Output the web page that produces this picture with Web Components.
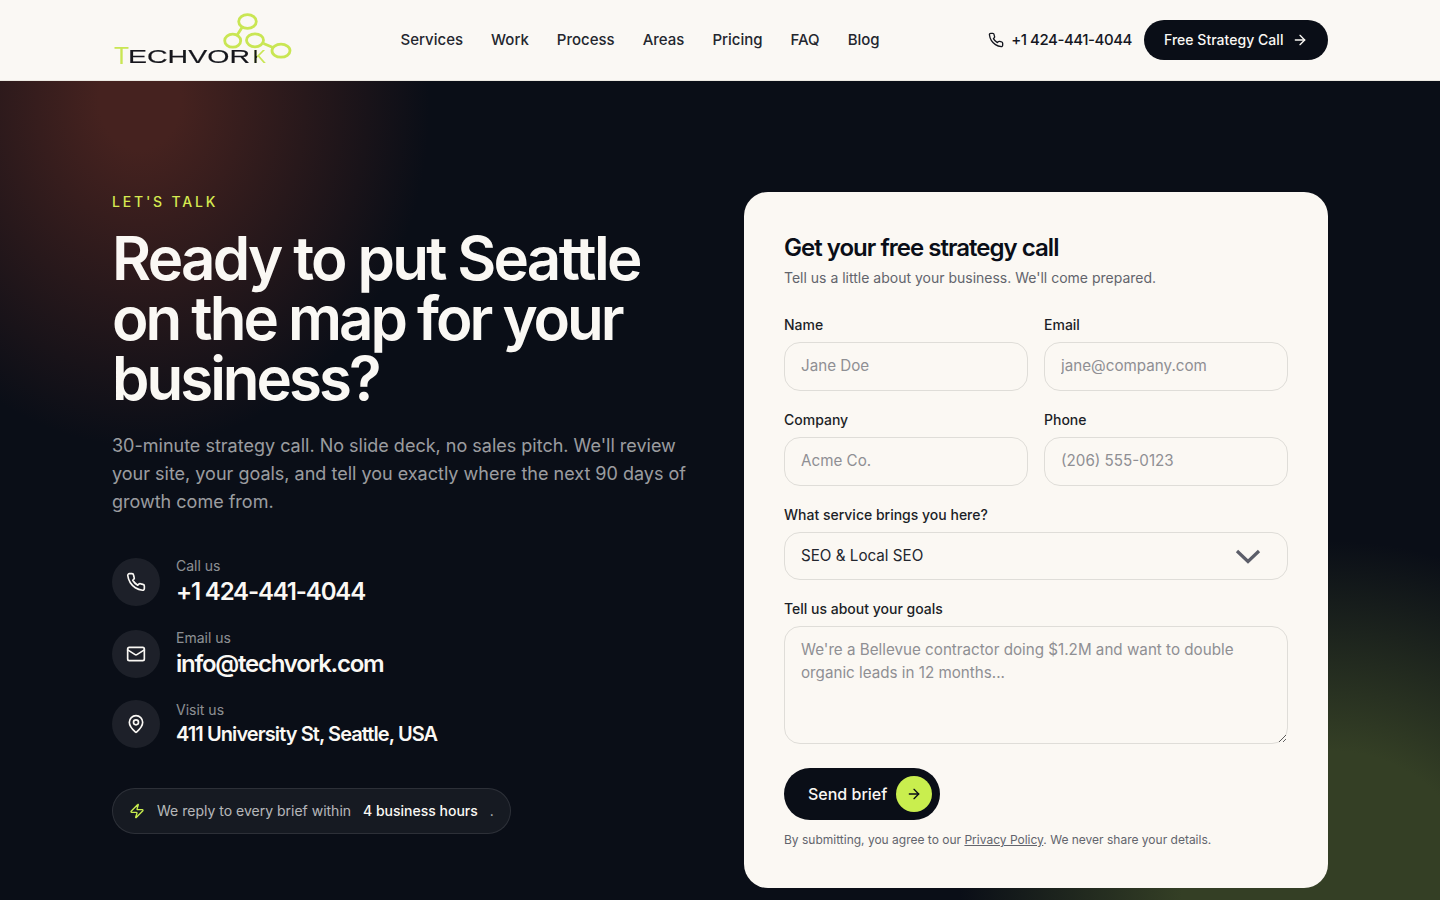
<!DOCTYPE html>
<html lang="en"><head><meta charset="utf-8"><title>Techvork</title>
<style>
html,body{margin:0;padding:0;background:#0a0e17}
body{font-family:Inter,"Liberation Sans",sans-serif}
</style></head><body>
<site-header></site-header>
<contact-hero>
  <contact-intro slot="left"></contact-intro>
  <lead-form slot="right"></lead-form>
</contact-hero>
<script>
const I={
 phone:'<path d="M22 16.92v3a2 2 0 0 1-2.18 2 19.79 19.79 0 0 1-8.63-3.07 19.5 19.5 0 0 1-6-6 19.79 19.79 0 0 1-3.07-8.67A2 2 0 0 1 4.11 2h3a2 2 0 0 1 2 1.72c.13.96.36 1.9.7 2.81a2 2 0 0 1-.45 2.11L8.09 9.91a16 16 0 0 0 6 6l1.27-1.27a2 2 0 0 1 2.11-.45c.91.34 1.85.57 2.81.7A2 2 0 0 1 22 16.92z"/>',
 arrow:'<path d="M5 12h14"/><path d="m12 5 7 7-7 7"/>',
 mail:'<rect x="2" y="4" width="20" height="16" rx="2"/><path d="m22 7-8.97 5.7a1.94 1.94 0 0 1-2.06 0L2 7"/>',
 pin:'<path d="M20 10c0 4.99-5.54 10.19-7.4 11.8a1 1 0 0 1-1.2 0C9.54 20.19 4 14.99 4 10a8 8 0 0 1 16 0"/><circle cx="12" cy="10" r="3"/>',
 bolt:'<path d="M4 14a1 1 0 0 1-.78-1.63l9.9-10.2a.5.5 0 0 1 .86.46l-1.92 6.02A1 1 0 0 0 13 10h7a1 1 0 0 1 .78 1.63l-9.9 10.2a.5.5 0 0 1-.86-.46l1.92-6.02A1 1 0 0 0 11 14z"/>'
};
const svg=(n,s,w=2)=>`<svg width="${s}" height="${s}" viewBox="0 0 24 24" fill="none" stroke="currentColor" stroke-width="${w}" stroke-linecap="round" stroke-linejoin="round" aria-hidden="true">${I[n]}</svg>`;
class Base extends HTMLElement{
  render(html){this.attachShadow({mode:'open'}).innerHTML=html}
}
customElements.define('brand-logo',class extends Base{connectedCallback(){this.render(`
<style>:host{display:block;width:180px;height:80px}svg{display:block}text{font-family:"Liberation Sans",Arial,sans-serif}</style>
<svg width="180" height="80" viewBox="0 0 180 80" role="img" aria-label="Techvork">
<defs><filter id="b" x="-5%" y="-5%" width="110%" height="110%"><feGaussianBlur stdDeviation=".4"/></filter>
<clipPath id="k"><rect x="141" y="48" width="4" height="18"/></clipPath></defs>
<g filter="url(#b)">
<g fill="none" stroke="#c9e653" stroke-width="2.800">
<ellipse cx="135.500" cy="21.500" rx="8.800" ry="6.800"/><ellipse cx="120.700" cy="40.700" rx="8" ry="6.500"/><ellipse cx="143" cy="40.300" rx="8.500" ry="6.500"/><ellipse cx="169" cy="50.700" rx="9" ry="6.500"/>
<path d="M130 27.500 125.500 34.500M151.500 43.500l9.500 4"/></g>
<text x="2" y="63.500" font-size="24" fill="#c9e653" textLength="15" lengthAdjust="spacingAndGlyphs">T</text>
<text x="16" y="63.200" font-size="18" fill="#15171c" textLength="122" lengthAdjust="spacingAndGlyphs" stroke="#15171c" stroke-width=".15">ECHVOR</text>
<text x="141" y="63.200" font-size="18" fill="#c9e653" textLength="13" lengthAdjust="spacingAndGlyphs">K</text>
<text x="141" y="63.200" font-size="18" fill="#15171c" stroke="#15171c" stroke-width=".2" textLength="13" lengthAdjust="spacingAndGlyphs" clip-path="url(#k)">K</text>
</g></svg>`)}});
customElements.define('nav-links',class extends Base{connectedCallback(){this.render(`
<style>:host{display:flex;gap:28px;font-size:15px;font-weight:500;line-height:20px;color:#23262e}a{color:inherit;text-decoration:none}</style>
${['Services','Work','Process','Areas','Pricing','FAQ','Blog'].map(t=>`<a href="#">${t}</a>`).join('')}`)}});
customElements.define('site-header',class extends Base{connectedCallback(){this.render(`
<style>:host{display:flex;align-items:center;justify-content:space-between;height:80px;padding:0 112px;background:#faf8f4;border-bottom:1px solid #ece9e2;color:#0a0e17}
.r{display:flex;align-items:center;gap:12px}
.p{display:flex;align-items:center;gap:7px;font-size:15px;line-height:20px;font-weight:500;letter-spacing:-.45px;color:#14171f;text-decoration:none}
.p svg{display:block}
.cta{display:flex;align-items:center;width:184px;height:40px;padding:0 20px;box-sizing:border-box;justify-content:space-between;background:#0a0e17;color:#faf8f4;border-radius:20px;font-size:14px;line-height:20px;font-weight:500;text-decoration:none;white-space:nowrap;flex:none}
.cta span{letter-spacing:.03px}
.cta svg{flex:none}
</style>
<brand-logo></brand-logo><nav-links></nav-links>
<div class="r"><a class="p" href="#">${svg('phone',16)}<span>+1 424-441-4044</span></a>
<a class="cta" href="#"><span>Free Strategy Call</span>${svg('arrow',16)}</a></div>`)}});
customElements.define('contact-hero',class extends Base{connectedCallback(){this.render(`
<style>:host{display:grid;grid-template-columns:1fr 584px;gap:56px;align-items:start;box-sizing:border-box;height:819px;overflow:hidden;padding:111px 112px 0;
background:radial-gradient(290px 345px at 140px 20px,#45221f 0,#45221f 14%,rgba(69,34,31,0) 100%),radial-gradient(370px 350px at 1330px 810px,#343f25 0,#343f25 40%,rgba(52,63,37,0) 100%),#0a0e17}</style>
<slot name="left"></slot><slot name="right"></slot>`)}});
customElements.define('contact-item',class extends Base{connectedCallback(){const s=+this.getAttribute('size');this.render(`
<style>:host{display:flex;align-items:center;gap:16px}
.i{width:48px;height:48px;border-radius:50%;background:rgba(255,255,255,.08);display:flex;align-items:center;justify-content:center;color:#faf8f4;flex:none}
.l{font-size:14px;line-height:20px;color:rgba(255,255,255,.55)}
.v{font-weight:600;letter-spacing:${this.getAttribute('track')};color:#faf8f4;font-size:${s}px;line-height:${s==24?32:28}px}
</style><div class="i">${svg(this.getAttribute('icon'),20)}</div>
<div><div class="l">${this.getAttribute('label')}</div><div class="v"><slot></slot></div></div>`)}});
customElements.define('contact-intro',class extends Base{connectedCallback(){this.render(`
<style>:host{display:block;color:#faf8f4}
.e{font-size:14px;line-height:20px;font-weight:500;letter-spacing:.2em;color:#d6ea50;margin:0 0 16px}
h1{margin:0 0 24px;font-size:60px;line-height:60px;font-weight:600;letter-spacing:-3px}
h1 .a{display:block;letter-spacing:-2.68px}
p{margin:0 0 40px;font-size:18px;line-height:28px;color:rgba(255,255,255,.6)}
.list{display:flex;flex-direction:column;gap:20px;margin-bottom:40px}
.pill{display:inline-flex;align-items:center;gap:12px;padding:12px 16px;border:1px solid rgba(255,255,255,.1);background:rgba(255,255,255,.05);border-radius:23px;font-size:14px;line-height:20px;color:rgba(255,255,255,.7)}
.pill svg{display:block;color:#c9ee4e}.pill b{font-weight:500;color:#faf8f4}
</style>
<div class="e">LET'S TALK</div>
<h1><span class="a">Ready to put Seattle</span>on the map for your business?</h1>
<p>30-minute strategy call. No slide deck, no sales pitch. We'll review your site, your goals, and tell you exactly where the next 90 days of growth come from.</p>
<div class="list">
<contact-item icon="phone" label="Call us" size="24" track="-1.16px">+1 424-441-4044</contact-item>
<contact-item icon="mail" label="Email us" size="24" track="-1.25px">info@techvork.com</contact-item>
<contact-item icon="pin" label="Visit us" size="20" track="-.92px">411 University St, Seattle, USA</contact-item>
</div>
<div class="pill">${svg('bolt',16)}<span>We reply to every brief within</span><b>4 business hours</b><span>.</span></div>`)}});
customElements.define('form-field',class extends Base{connectedCallback(){const t=this.getAttribute('type')||'text',ph=this.getAttribute('placeholder')||'',lb=this.getAttribute('label');
let c;
if(t==='select')c=`<div class="sw"><select><option>SEO &amp; Local SEO</option><option>Web Design</option></select><svg class="ch" width="26" height="16" viewBox="0 0 26 16" fill="none" stroke="#5c5e69" stroke-width="3.200" aria-hidden="true"><path d="M2 3l11 10.500L24 3"/></svg></div>`;
else if(t==='area')c=`<textarea placeholder="${ph}"></textarea>`;
else c=`<input type="${t}" placeholder="${ph}">`;
this.render(`
<style>:host{display:block;${t==='select'||t==='area'?'grid-column:1/-1':''}}
label{display:block;font-size:14px;line-height:20px;font-weight:500;color:#1c1f27;margin-bottom:7px}
input,select,textarea{display:block;width:100%;box-sizing:border-box;border:1px solid #dfddd8;border-radius:16px;background:#fbf8f3;font:400 15.2px/22.8px Inter,"Liberation Sans",sans-serif;color:#23262e;padding:11px 16px;outline:none;margin:0}
input{height:49px;padding-top:10px;padding-bottom:13px}select{height:48px;padding-top:11px;padding-bottom:11px;appearance:none;-webkit-appearance:none}
textarea{height:118px;padding-top:12px;resize:vertical}
::placeholder{color:#8f8f93;opacity:1}
.sw{position:relative}.ch{position:absolute;right:27px;top:16px;pointer-events:none}
</style><label>${lb}</label>${c}`)}});
customElements.define('lead-form',class extends Base{connectedCallback(){this.render(`
<style>:host{display:block;box-sizing:border-box;height:696px;padding:40px;background:#fbf8f3;border-radius:24px;color:#0a0e17}
h2{margin:0 0 4px;font-size:24px;line-height:32px;font-weight:600;letter-spacing:-.98px}
.s{margin:0 0 27px;font-size:14px;line-height:20px;color:#62646c}
.g{display:grid;grid-template-columns:1fr 1fr;column-gap:16px;row-gap:19px}
.b{display:inline-flex;align-items:center;gap:9px;height:52px;margin-top:24px;padding:0 8px 0 24px;box-sizing:border-box;border:0;border-radius:26px;background:#0a0e17;color:#faf8f4;font:500 16px/24px Inter,"Liberation Sans",sans-serif}
.c{width:36px;height:36px;border-radius:50%;background:#c9ee4e;color:#0a0e17;display:flex;align-items:center;justify-content:center}
.c svg{display:block}
.n{margin:12px 0 0;font-size:12px;line-height:16px;color:#62646c}.n a{color:inherit}
</style>
<h2>Get your free strategy call</h2>
<p class="s">Tell us a little about your business. We'll come prepared.</p>
<div class="g">
<form-field label="Name" placeholder="Jane Doe"></form-field>
<form-field label="Email" type="email" placeholder="jane@company.com"></form-field>
<form-field label="Company" placeholder="Acme Co."></form-field>
<form-field label="Phone" type="tel" placeholder="(206) 555-0123"></form-field>
<form-field label="What service brings you here?" type="select"></form-field>
<form-field label="Tell us about your goals" type="area" placeholder="We're a Bellevue contractor doing $1.2M and want to double organic leads in 12 months..."></form-field>
</div>
<button class="b" type="button"><span>Send brief</span><span class="c">${svg('arrow',16)}</span></button>
<p class="n">By submitting, you agree to our <a href="#">Privacy Policy</a>. We never share your details.</p>`)}});
</script>
</body></html>
